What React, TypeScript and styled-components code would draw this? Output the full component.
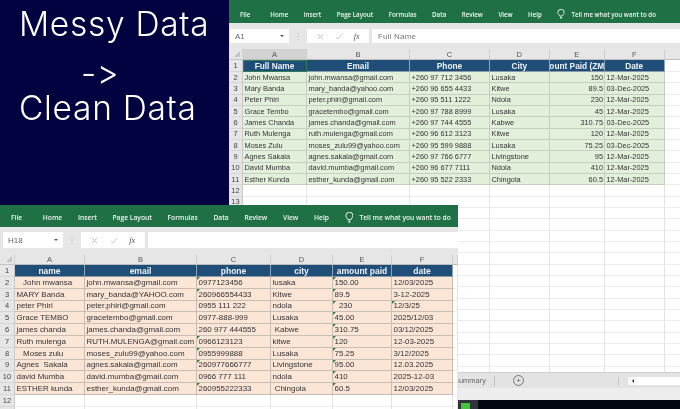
import React from "react";
import styled, { createGlobalStyle } from "styled-components";

const Global = createGlobalStyle`
  html, body { margin: 0; padding: 0; background: #01023f; }
  body { width: 680px; height: 409px; overflow: hidden; font-family: "Liberation Sans", Arial, sans-serif; }
`;

const Page = styled.div`
  position: relative;
  width: 680px;
  height: 409px;
  overflow: hidden;
  display: grid;
  grid-template-columns: 229px 451px;
  background: #01023f;
`;

const TitlePanel = styled.div`
  display: flex;
  flex-direction: column;
  color: #fff;
  font-family: "Inter", sans-serif;
  font-weight: 300;
  font-size: 33.5px;
  letter-spacing: 0.7px;
  line-height: 30px;
  font-variant-ligatures: none;
  font-feature-settings: "calt" 0, "liga" 0;
  filter: blur(0.3px);
`;
const TitleLine = styled.div<{ $left: number; $top: number }>`
  margin-left: ${(p) => p.$left}px;
  margin-top: ${(p) => p.$top}px;
  white-space: nowrap;
`;

const Sheet = styled.div<{ $rowFont: number }>`
  display: flex;
  flex-direction: column;
  background: #fff;
  overflow: hidden;
  filter: blur(0.4px);
  font-size: ${(p) => p.$rowFont}px;
`;
const TopSheet = styled(Sheet)`
  height: 409px;
`;
const BottomSheet = styled(Sheet)`
  position: absolute;
  left: 0;
  top: 205px;
  width: 458px;
  height: 204px;
`;

const Ribbon = styled.div<{ $h: number; $pt: number; $pad: number; $gap: number; $font: number }>`
  flex: none;
  box-sizing: border-box;
  height: ${(p) => p.$h}px;
  padding: ${(p) => p.$pt}px 0 0 ${(p) => p.$pad}px;
  display: flex;
  align-items: center;
  gap: ${(p) => p.$gap}px;
  background: #1f7145;
  color: #f0f6f2;
  font-family: "Open Sans", sans-serif;
  font-weight: 600;
  font-size: ${(p) => p.$font}px;
  white-space: nowrap;
`;
const RibbonTab = styled.span<{ $wide?: number }>`
  margin-right: ${(p) => p.$wide ?? 0}px;
`;
const TellMe = styled.span`
  display: flex;
  align-items: center;
  gap: 6px;
`;

const FormulaBar = styled.div<{ $h: number; $pt: number; $pb: number; $pl: number }>`
  flex: none;
  box-sizing: border-box;
  height: ${(p) => p.$h}px;
  padding: ${(p) => p.$pt}px 0 ${(p) => p.$pb}px ${(p) => p.$pl}px;
  display: flex;
  align-items: stretch;
  background: #e6e6e6;
  color: #666;
  font-size: 8px;
`;
const NameBox = styled.div<{ $w: number }>`
  width: ${(p) => p.$w}px;
  box-sizing: border-box;
  padding: 0 5px;
  background: #fff;
  display: flex;
  align-items: center;
  justify-content: space-between;
`;
const Caret = styled.span`
  width: 0;
  height: 0;
  border-left: 2.5px solid transparent;
  border-right: 2.5px solid transparent;
  border-top: 2.5px solid #555;
`;
const Grip = styled.div<{ $w: number }>`
  width: ${(p) => p.$w}px;
  display: flex;
  align-items: center;
  justify-content: center;
  color: #bbb;
  font-size: 8px;
`;
const FxButtons = styled.div<{ $w: number }>`
  width: ${(p) => p.$w}px;
  background: #fff;
  margin-right: 3px;
  display: flex;
  align-items: center;
  justify-content: space-around;
  padding: 0 4px;
  box-sizing: border-box;
  color: #bdbdbd;
`;
const Fx = styled.span`
  color: #555;
  font-family: "Liberation Serif", serif;
  font-style: italic;
  font-size: 8px;
`;
const FormulaInput = styled.div`
  flex: 1;
  background: #fff;
  padding-left: 6px;
  display: flex;
  align-items: center;
  color: #777;
  font-size: 8px;
  letter-spacing: 0.2px;
`;

const Grid = styled.div<{ $cols: string; $rowH: number; $headH: number; $colH: number }>`
  flex: 1;
  min-height: 0;
  overflow: hidden;
  display: grid;
  grid-template-columns: ${(p) => p.$cols};
  grid-template-rows: ${(p) => p.$colH}px ${(p) => p.$headH}px;
  grid-auto-rows: ${(p) => p.$rowH}px;
  align-content: start;
  color: #333;
`;
const Corner = styled.div`
  background: #e6e6e6;
  border-right: 1px solid #d0d0d0;
  border-bottom: 1px solid #c4c4c4;
  box-sizing: border-box;
  position: relative;
  &::after {
    content: "";
    position: absolute;
    right: 2px;
    bottom: 2px;
    border-left: 6px solid transparent;
    border-bottom: 6px solid #c4c4c4;
  }
`;
const ColHead = styled.div<{ $active?: boolean }>`
  background: ${(p) => (p.$active ? "#d2d2d2" : "#e6e6e6")};
  border-right: 1px solid #cfcfcf;
  border-bottom: 1px solid #bcbcbc;
  box-sizing: border-box;
  display: flex;
  align-items: center;
  justify-content: center;
  color: #555;
  font-size: 7.5px;
`;
const RowNum = styled.div`
  background: #e6e6e6;
  border-right: 1px solid #c9c9c9;
  border-bottom: 1px solid #d6d6d6;
  box-sizing: border-box;
  display: flex;
  align-items: center;
  justify-content: center;
  color: #444;
  font-size: 7.5px;
`;
const HeadCell = styled.div<{ $selected?: boolean; $size: number }>`
  background: #1f4e79;
  border-right: 1px solid #8ca3ba;
  border-bottom: 1px solid #8a9aa8;
  box-sizing: border-box;
  display: flex;
  align-items: center;
  justify-content: center;
  overflow: hidden;
  white-space: nowrap;
  color: #eef3f8;
  font-weight: 700;
  font-size: ${(p) => p.$size}px;
  outline: ${(p) => (p.$selected ? "1.5px solid #2f7d55" : "none")};
  outline-offset: -1px;
`;
const Cell = styled.div<{ $bg: string; $line: string; $right?: boolean; $flag?: boolean }>`
  position: relative;
  background: ${(p) => p.$bg};
  border-right: 1px solid ${(p) => p.$line};
  border-bottom: 1px solid ${(p) => p.$line};
  box-sizing: border-box;
  padding: 0 1px 0 1.5px;
  display: flex;
  align-items: center;
  justify-content: ${(p) => (p.$right ? "flex-end" : "flex-start")};
  overflow: hidden;
  white-space: pre;
  &::before {
    content: "";
    display: ${(p) => (p.$flag ? "block" : "none")};
    position: absolute;
    left: 0;
    top: 0;
    border-top: 3.5px solid #1c8a3a;
    border-right: 3.5px solid transparent;
  }
`;
const Blank = styled.div`
  background: #fff;
  border-right: 1px solid #e4e4e4;
  border-bottom: 1px solid #ececec;
  box-sizing: border-box;
`;

const TabBar = styled.div`
  flex: none;
  height: 16px;
  display: flex;
  align-items: center;
  background: #e3e3e3;
  border-top: 1px solid #cfcfcf;
  box-sizing: border-box;
  color: #666;
  font-size: 7.5px;
  overflow: hidden;
`;
const TabSpacer = styled.div<{ $w: number }>`
  flex: none;
  width: ${(p) => p.$w}px;
`;
const TabName = styled.div`
  flex: none;
  width: 28px;
  height: 10px;
  padding-right: 8px;
  border-right: 1px solid #bdbdbd;
  margin-right: 18px;
  display: flex;
  align-items: center;
  justify-content: flex-end;
  box-sizing: content-box;
`;
const AddTab = styled.div`
  flex: none;
  width: 9px;
  height: 9px;
  border: 1px solid #777;
  border-radius: 50%;
  display: flex;
  align-items: center;
  justify-content: center;
  font-size: 8px;
  line-height: 1;
  color: #555;
`;
const TabGrip = styled.div`
  flex: none;
  width: 1px;
  height: 8px;
  margin-left: 94px;
  margin-right: 9px;
  background: #c4c4c4;
`;
const ScrollStart = styled.div`
  flex: none;
  width: 9px;
  height: 8px;
  background: #f7f7f7;
  display: flex;
  align-items: center;
  justify-content: center;
  &::after {
    content: "";
    border-right: 2.5px solid #333;
    border-top: 2px solid transparent;
    border-bottom: 2px solid transparent;
  }
`;
const ScrollTrack = styled.div`
  flex: 1;
  height: 8px;
  background: #fff;
`;
const StatusBar = styled.div`
  flex: none;
  height: 12px;
  background: #ededed;
`;
const Taskbar = styled.div`
  flex: none;
  height: 9px;
  background: #03070f;
  display: flex;
`;
const TaskIcon = styled.div`
  flex: none;
  margin-left: 229px;
  width: 20px;
  height: 9px;
  background: #30343a;
  padding: 3px 0 0 3px;
  box-sizing: border-box;
  &::after {
    content: "";
    display: block;
    width: 9px;
    height: 6px;
    background: #46c23f;
  }
`;

type SheetSpec = {
  cols: string;
  letters: string[];
  rowH: number;
  headH: number;
  colH: number;
  bg: string;
  line: string;
  headSize: number;
  headers: string[];
  rows: string[][];
  flags?: number[][];
  rightCol?: number;
  blankRows: number;
  numberedBlanks: number;
  active?: number;
  selected?: number;
};

const SheetGrid: React.FC<{ s: SheetSpec }> = ({ s }) => (
  <Grid $cols={s.cols} $rowH={s.rowH} $headH={s.headH} $colH={s.colH}>
    <Corner />
    {s.letters.map((l, i) => (
      <ColHead key={i} $active={s.active === i}>{l}</ColHead>
    ))}
    <RowNum>1</RowNum>
    {s.letters.map((_, i) =>
      i < s.headers.length ? (
        <HeadCell key={i} $size={s.headSize} $selected={s.selected === i}>{s.headers[i]}</HeadCell>
      ) : (
        <Blank key={i} />
      )
    )}
    {s.rows.map((r, ri) => (
      <React.Fragment key={ri}>
        <RowNum>{ri + 2}</RowNum>
        {s.letters.map((_, ci) =>
          ci < r.length ? (
            <Cell
              key={ci}
              $bg={s.bg}
              $line={s.line}
              $right={s.rightCol === ci}
              $flag={s.flags?.[ri]?.includes(ci)}
            >
              {r[ci]}
            </Cell>
          ) : (
            <Blank key={ci} />
          )
        )}
      </React.Fragment>
    ))}
    {Array.from({ length: s.blankRows }, (_, bi) => (
      <React.Fragment key={bi}>
        <RowNum>{bi < s.numberedBlanks ? s.rows.length + 2 + bi : ""}</RowNum>
        {s.letters.map((_, ci) => <Blank key={ci} />)}
      </React.Fragment>
    ))}
  </Grid>
);

const cleanRows = [
  ["John Mwansa", "john.mwansa@gmail.com", "+260 97 712 3456", "Lusaka", "150", "12-Mar-2025"],
  ["Mary Banda", "mary_banda@yahoo.com", "+260 96 655 4433", "Kitwe", "89.5", "03-Dec-2025"],
  ["Peter Phiri", "peter.phiri@gmail.com", "+260 95 511 1222", "Ndola", "230", "12-Mar-2025"],
  ["Grace Tembo", "gracetembo@gmail.com", "+260 97 788 8999", "Lusaka", "45", "12-Mar-2025"],
  ["James Chanda", "james.chanda@gmail.com", "+260 97 744 4555", "Kabwe", "310.75", "03-Dec-2025"],
  ["Ruth Mulenga", "ruth.mulenga@gmail.com", "+260 96 612 3123", "Kitwe", "120", "12-Mar-2025"],
  ["Moses Zulu", "moses_zulu99@yahoo.com", "+260 95 599 9888", "Lusaka", "75.25", "03-Dec-2025"],
  ["Agnes Sakala", "agnes.sakala@gmail.com", "+260 97 766 6777", "Livingstone", "95", "12-Mar-2025"],
  ["David Mumba", "david.mumba@gmail.com", "+260 96 677 7111", "Ndola", "410", "12-Mar-2025"],
  ["Esther Kunda", "esther_kunda@gmail.com", "+260 95 522 2333", "Chingola", "60.5", "12-Mar-2025"],
];

const messyRows = [
  ["   John mwansa", "john.mwansa@gmail.com", "0977123456", "lusaka", "150.00", "12/03/2025"],
  ["MARY Banda", "mary_banda@YAHOO.com", "260966554433", "Kitwe", "89.5", "3-12-2025"],
  ["peter Phiri", "peter.phiri@gmail.com", "0955 111 222", "ndola", "  230", "12/3/25"],
  ["Grace TEMBO", "gracetembo@gmail.com", "0977-888-999", "Lusaka", "45.00", "2025/12/03"],
  ["james chanda", "james.chanda@gmail.com", "260 977 444555", " Kabwe", "310.75", "03/12/2025"],
  ["Ruth mulenga", "RUTH.MULENGA@gmail.com", "0966123123", "kitwe", "120", "12-03-2025"],
  ["   Moses zulu", "moses_zulu99@yahoo.com", "0955999888", "Lusaka", "75.25", "3/12/2025"],
  ["Agnes  Sakala", "agnes.sakala@gmail.com", "260977666777", "Livingstone", "95.00", "12.03.2025"],
  ["david Mumba", "david.mumba@gmail.com", "0966 777 111", "ndola", "410", "2025-12-03"],
  ["ESTHER kunda", "esther_kunda@gmail.com", "260955222333", " Chingola", "60.5", "12/03/2025"],
];

const topSpec: SheetSpec = {
  cols: "14px 64px 103px 80px 59.5px 55.5px 59.5px 16px",
  letters: ["A", "B", "C", "D", "E", "F", ""],
  rowH: 11.33,
  headH: 12,
  colH: 11,
  bg: "#e2efda",
  line: "#c5cfbf",
  headSize: 8.3,
  headers: ["Full Name", "Email", "Phone", "City", "ount Paid (ZM", "Date"],
  rows: cleanRows,
  rightCol: 4,
  blankRows: 17,
  numberedBlanks: 2,
  active: 0,
  selected: 0,
};

const bottomSpec: SheetSpec = {
  cols: "15px 70px 112px 74px 62px 59px 61px 5px",
  letters: ["A", "B", "C", "D", "E", "F", ""],
  rowH: 11.8,
  headH: 12,
  colH: 10,
  bg: "#fbe5d6",
  line: "#c9bdb3",
  headSize: 8.5,
  headers: ["name", "email", "phone", "city", "amount paid", "date"],
  rows: messyRows,
  flags: [[2, 4], [2, 4], [4, 5], [4], [4], [2, 4], [2, 4], [2, 4], [4], [2, 4]],
  blankRows: 2,
  numberedBlanks: 1,
};

const Bulb: React.FC<{ size: number }> = ({ size }) => (
  <svg width={size * 0.8} height={size} viewBox="0 0 8 10" fill="none" stroke="#f0f6f2" strokeWidth="0.9">
    <path d="M2.6 7 C2.4 5.8 .8 5 .8 3.4 A3.2 3.2 0 0 1 7.2 3.4 C7.2 5 5.6 5.8 5.4 7 Z" />
    <path d="M3 8.4 H5 M3.4 9.6 H4.6" />
  </svg>
);

const Cross = () => (
  <svg width="7" height="7" viewBox="0 0 7 7" stroke="#bdbdbd" strokeWidth="1">
    <path d="M1 1 L6 6 M6 1 L1 6" />
  </svg>
);
const Check = () => (
  <svg width="8" height="7" viewBox="0 0 8 7" fill="none" stroke="#c8c8c8" strokeWidth="1">
    <path d="M1 4 L3 6 L7 1" />
  </svg>
);

const tabs = ["File", "Home", "Insert", "Page Layout", "Formulas", "Data", "Review", "View", "Help"];

export default function App() {
  return (
    <Page>
      <Global />
      <TitlePanel>
        <TitleLine $left={19} $top={9}>Messy Data</TitleLine>
        <TitleLine $left={81} $top={19}>-&gt;</TitleLine>
        <TitleLine $left={19} $top={5}>Clean Data</TitleLine>
      </TitlePanel>

      <TopSheet $rowFont={7.4}>
        <Ribbon $h={23} $pt={5} $pad={11} $gap={15.5} $font={6.2}>
          {tabs.map((t, i) => (
            <RibbonTab key={t} $wide={i === 0 ? 4.5 : 0}>{t}</RibbonTab>
          ))}
          <TellMe>
            <Bulb size={10} />
            Tell me what you want to do
          </TellMe>
        </Ribbon>
        <FormulaBar $h={26} $pt={6} $pb={6} $pl={1}>
          <NameBox $w={59}>A1<Caret /></NameBox>
          <Grip $w={18}>⋮</Grip>
          <FxButtons $w={62}><Cross /><Check /><Fx>fx</Fx></FxButtons>
          <FormulaInput>Full Name</FormulaInput>
        </FormulaBar>
        <SheetGrid s={topSpec} />
        <TabBar>
          <TabSpacer $w={229} />
          <TabName>Summary</TabName>
          <AddTab>+</AddTab>
          <TabGrip />
          <ScrollStart />
          <ScrollTrack />
        </TabBar>
        <StatusBar />
        <Taskbar><TaskIcon /></Taskbar>
      </TopSheet>

      <BottomSheet $rowFont={7.95}>
        <Ribbon $h={22} $pt={3} $pad={11} $gap={15.7} $font={6.7}>
          {tabs.map((t, i) => (
            <RibbonTab key={t} $wide={i === 0 ? 5 : 0}>{t}</RibbonTab>
          ))}
          <TellMe>
            <Bulb size={11} />
            Tell me what you want to do
          </TellMe>
        </Ribbon>
        <FormulaBar $h={28} $pt={5} $pb={7} $pl={3}>
          <NameBox $w={60}>H18<Caret /></NameBox>
          <Grip $w={18}>⋮</Grip>
          <FxButtons $w={64}><Cross /><Check /><Fx>fx</Fx></FxButtons>
          <FormulaInput />
        </FormulaBar>
        <SheetGrid s={bottomSpec} />
      </BottomSheet>
    </Page>
  );
}
